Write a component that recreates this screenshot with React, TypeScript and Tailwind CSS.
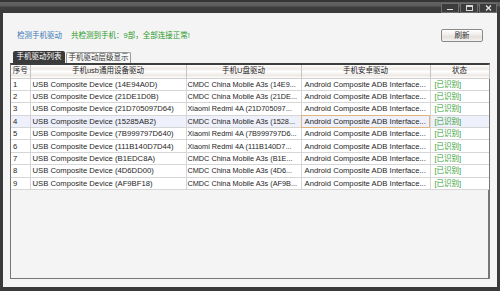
import React from "react";

const ROWS = [
  ["1", "USB Composite Device (14E94A0D)", "CMDC China Mobile A3s (14E9..."],
  ["2", "USB Composite Device (21DE1D0B)", "CMDC China Mobile A3s (21DE..."],
  ["3", "USB Composite Device (21D705097D64)", "Xiaomi Redmi 4A (21D705097..."],
  ["4", "USB Composite Device (15285AB2)", "CMDC China Mobile A3s (1528..."],
  ["5", "USB Composite Device (7B999797D640)", "Xiaomi Redmi 4A (7B999797D6..."],
  ["6", "USB Composite Device (111B140D7D44)", "Xiaomi Redmi 4A (111B140D7..."],
  ["7", "USB Composite Device (B1EDC8A)", "CMDC China Mobile A3s (B1E..."],
  ["8", "USB Composite Device (4D6DD00)", "CMDC China Mobile A3s (4D6..."],
  ["9", "USB Composite Device (AF9BF18)", "CMDC China Mobile A3s (AF9B..."],
];

const HEADERS = ["序号", "手机usb通用设备驱动", "手机U盘驱动", "手机安卓驱动", "状态"];

function TitleButton({ children }: { children: React.ReactNode }) {
  return (
    <div className="w-[18px] h-[10px] border border-[#6e6e6e] bg-[#3c3c3c] flex items-center justify-center">
      {children}
    </div>
  );
}

export default function App() {
  return (
    <div
      className="w-[500px] h-[291px] flex flex-col bg-[#3a3a3a] text-[7.7px] text-[#262626]"
      style={{ fontFamily: '"Liberation Sans", "Noto Sans CJK SC", sans-serif' }}
    >
      {/* Title bar */}
      <div className="h-[13px] shrink-0 relative bg-[linear-gradient(#353535_0px,#353535_2px,#626262_2px,#5c5c5c_6px,#3e3e3e_7px,#3a3a3a_13px)]">
        <div className="absolute right-[3px] top-[3px] flex gap-[1px]">
          <TitleButton>
            <div className="w-[6px] h-[1px] bg-[#e0e0e0] mt-[3px]" />
          </TitleButton>
          <TitleButton>
            <div className="w-[7px] h-[6px] border border-[#d8d8d8] border-t-2" />
          </TitleButton>
          <TitleButton>
            <svg width="7" height="6" viewBox="0 0 7 6">
              <path d="M1 0.5 L6 5.5 M6 0.5 L1 5.5" stroke="#e8e8e8" strokeWidth="1.3" />
            </svg>
          </TitleButton>
        </div>
      </div>

      {/* Content */}
      <div className="flex-1 mx-[3px] mb-[4px] bg-[#f4f4f4] flex flex-col">
        <div className="flex items-center h-[13px] mt-[16px] pl-[14px] pr-[14px]">
          <span className="text-[#3c7ab6] text-[7.5px]">检测手机驱动</span>
          <span className="text-[#2b9a2b] text-[7.5px] ml-[9px]">共检测到手机：9部，全部连接正常!</span>
          <div className="ml-auto w-[42px] h-[13px] rounded-[2px] border border-[#8a8a8a] bg-[linear-gradient(#ffffff,#f2efec_40%,#e6e0da_60%,#f4f2f0)] flex items-center justify-center text-[7.5px] text-[#333]">
            刷新
          </div>
        </div>

        {/* Tabs */}
        <div className="flex items-end h-[12px] mt-[9px] pl-[10px] gap-[1px]">
          <div className="w-[52px] h-[12px] rounded-t-[2px] bg-[#3a3a3a] text-white text-[7.5px] flex items-center justify-center">
            手机驱动列表
          </div>
          <div className="w-[65px] h-[11px] rounded-t-[2px] border border-b-0 border-[#9a9a9a] bg-[#f8f8f8] text-[#333] text-[7.5px] flex items-center justify-center">
            手机驱动层级显示
          </div>
        </div>

        {/* Table */}
        <div className="mx-[7px] mb-[8px] flex-1 border-t-2 border-t-[#3c3c3c] border-x border-b border-[#767676] border-r-2 bg-[#f4f4f4]">
          <table className="table-fixed border-collapse w-[478px]">
            <colgroup>
              <col className="w-[19px]" />
              <col className="w-[156px]" />
              <col className="w-[115px]" />
              <col className="w-[129px]" />
              <col className="w-[59px]" />
            </colgroup>
            <thead>
              <tr className="h-[13px]">
                {HEADERS.map((h) => (
                  <th
                    key={h}
                    className="font-normal text-[7.5px] text-center border-r border-[#c8c4c0] bg-[linear-gradient(#ffffff,#ede9e5_30%,#ffffff_50%,#ede9e5_80%,#ffffff)] border-b border-b-[#d0d0d0] p-0 leading-[12px]"
                  >
                    {h}
                  </th>
                ))}
              </tr>
            </thead>
            <tbody>
              {ROWS.map(([n, usb, udisk]) => {
                const sel = n === "4";
                return (
                  <tr key={n} className={`h-[12.4px] ${sel ? "bg-[#eef0fb]" : "bg-white"}`}>
                    <td className="border-r border-b border-[#d6d6d6] pl-[2px] whitespace-nowrap overflow-hidden p-0 leading-[11px]">{n}</td>
                    <td className="border-r border-b border-[#d6d6d6] pl-[2px] whitespace-nowrap overflow-hidden p-0 leading-[11px]">{usb}</td>
                    <td className="border-r border-b border-[#d6d6d6] pl-[1px] whitespace-nowrap overflow-hidden p-0 leading-[11px] text-[7.3px]">{udisk}</td>
                    <td
                      className={`border-r border-b pl-[3px] whitespace-nowrap overflow-hidden p-0 leading-[11px] ${
                        sel ? "outline outline-1 -outline-offset-1 outline-[#e0b47a] border-[#d6d6d6]" : "border-[#d6d6d6]"
                      }`}
                    >
                      Android Composite ADB Interface...
                    </td>
                    <td className="border-b border-[#d6d6d6] pl-[4px] whitespace-nowrap overflow-hidden p-0 leading-[11px] text-[#2f9e2f] text-[7.5px]">
                      [已识别]
                    </td>
                  </tr>
                );
              })}
            </tbody>
          </table>
        </div>
      </div>
    </div>
  );
}
